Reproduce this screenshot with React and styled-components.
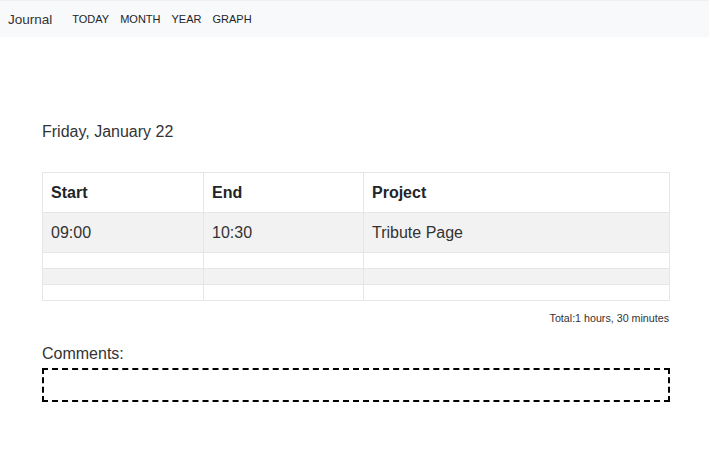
import React from "react";
import styled, { createGlobalStyle } from "styled-components";

const GlobalStyle = createGlobalStyle`
  body {
    margin: 0;
    font-family: "Liberation Sans", Arial, sans-serif;
    color: #212529;
    background: #ffffff;
  }
`;

const Nav = styled.nav`
  display: flex;
  align-items: center;
  height: 37px;
  width: 709px;
  background: #f8f9fa;
  border-top: 1px solid #eef0f2;
  padding: 0 0 0 8px;
  box-sizing: border-box;
`;

const Brand = styled.span`
  font-size: 13.5px;
  color: #333333;
  margin-right: 20px;
`;

const NavLink = styled.a`
  font-size: 11px;
  color: #212529;
  text-transform: uppercase;
  margin-right: 11px;
  text-decoration: none;
`;

const Main = styled.main`
  width: 628px;
  margin: 0 auto 0 42px;
  padding-top: 85px;
`;

const DateTitle = styled.h2`
  margin: 0 0 30px;
  font-size: 16px;
  font-weight: 400;
  color: #333333;
  line-height: 20px;
`;

const Table = styled.table`
  width: 100%;
  border-collapse: collapse;
  table-layout: fixed;
  font-size: 16px;
`;

const Th = styled.th`
  text-align: left;
  font-weight: 700;
  padding: 0 8px;
  height: 39px;
  border: 1px solid #e4e6e8;
  color: #212529;
  width: ${(p) => p.$w};
`;

const Row = styled.tr`
  background: ${(p) => (p.$striped ? "#f2f2f2" : "#ffffff")};
`;

const Td = styled.td`
  padding: 0 8px;
  height: ${(p) => (p.$empty ? "15px" : "39px")};
  border: 1px solid #e4e6e8;
  color: #333333;
`;

const Total = styled.p`
  margin: 11px 0 0;
  text-align: right;
  font-size: 10.7px;
  color: #333333;
  padding-right: 1px;
`;

const Label = styled.p`
  margin: 21px 0 5px;
  font-size: 16px;
  color: #333333;
`;

const CommentBox = styled.div`
  height: 30px;
  border: 2px dashed #000000;
`;

const rows = [
  { start: "09:00", end: "10:30", project: "Tribute Page" },
  null,
  null,
  null,
];

export default function App() {
  return (
    <>
      <GlobalStyle />
      <Nav>
        <Brand>Journal</Brand>
        <NavLink>Today</NavLink>
        <NavLink>Month</NavLink>
        <NavLink>Year</NavLink>
        <NavLink>Graph</NavLink>
      </Nav>
      <Main>
        <DateTitle>Friday, January 22</DateTitle>
        <Table>
          <thead>
            <tr>
              <Th $w="144px">Start</Th>
              <Th $w="143px">End</Th>
              <Th>Project</Th>
            </tr>
          </thead>
          <tbody>
            {rows.map((r, i) => (
              <Row key={i} $striped={i % 2 === 0}>
                <Td $empty={!r}>{r && r.start}</Td>
                <Td $empty={!r}>{r && r.end}</Td>
                <Td $empty={!r}>{r && r.project}</Td>
              </Row>
            ))}
          </tbody>
        </Table>
        <Total>Total:1 hours, 30 minutes</Total>
        <Label>Comments:</Label>
        <CommentBox />
      </Main>
    </>
  );
}
